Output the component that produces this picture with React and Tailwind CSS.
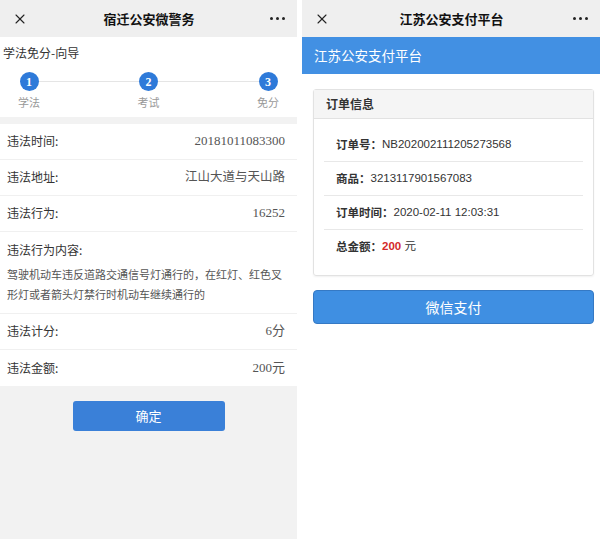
import { X } from "lucide-react"

const cjk = { fontFamily: '"Noto Sans CJK SC", "Noto Sans", sans-serif' }
const serif = { fontFamily: '"Liberation Serif", "Noto Sans CJK SC", serif' }

function NavBar({ title }) {
  return (
    <div className="h-[37px] bg-[#efefef] flex items-center justify-between px-[12px] shrink-0">
      <X className="w-[16px] h-[16px] text-[#222]" strokeWidth={1.6} />
      <span className="text-[13px] font-bold text-[#111]">{title}</span>
      <div className="flex gap-[3px] items-center">
        <span className="w-[3px] h-[3px] rounded-full bg-[#222]" />
        <span className="w-[3px] h-[3px] rounded-full bg-[#222]" />
        <span className="w-[3px] h-[3px] rounded-full bg-[#222]" />
      </div>
    </div>
  )
}

function Row({ label, value, last }) {
  return (
    <div className={`h-[36px] bg-white flex items-center justify-between pl-[7px] pr-[12px] ${last ? "" : "border-b border-[#f0f0f0]"}`}>
      <span className="text-[12px] text-[#333]">{label}</span>
      <span className="text-[13px] text-[#555]" style={serif}>{value}</span>
    </div>
  )
}

function Step({ n, label }) {
  return (
    <div className="flex flex-col items-center w-[40px]">
      <div className="w-[19px] h-[19px] rounded-full bg-[#2e7ad9] text-white text-[12px] font-bold flex items-center justify-center" style={serif}>{n}</div>
      <span className="text-[11px] text-[#999] mt-[3px]">{label}</span>
    </div>
  )
}

function LeftPanel() {
  return (
    <div className="w-[297px] h-[539px] bg-[#f2f2f2] flex flex-col">
      <NavBar title="宿迁公安微警务" />
      <div className="bg-white pt-[7px] pb-[6px]">
        <div className="text-[12px] text-[#333] px-[3px]">学法免分-向导</div>
        <div className="relative mt-[10px] flex justify-between px-[9px]">
          <div className="absolute left-[30px] right-[30px] top-[9px] h-[1px] bg-[#e5e5e5]" />
          <div className="relative"><Step n="1" label="学法" /></div>
          <div className="relative"><Step n="2" label="考试" /></div>
          <div className="relative"><Step n="3" label="免分" /></div>
        </div>
      </div>
      <div className="h-[7px]" />
      <Row label="违法时间:" value="20181011083300" />
      <Row label="违法地址:" value={<span style={cjk} className="text-[12.5px]">江山大道与天山路</span>} />
      <Row label="违法行为:" value="16252" />
      <div className="bg-white pl-[7px] pr-[12px] pt-[9px] pb-[9px] border-b border-[#f0f0f0]">
        <div className="text-[12px] text-[#333]">违法行为内容:</div>
        <div className="text-[11px] text-[#555] leading-[20px] mt-[5px]">
          驾驶机动车违反道路交通信号灯通行的，在红灯、红色叉形灯或者箭头灯禁行时机动车继续通行的
        </div>
      </div>
      <Row label="违法计分:" value="6分" />
      <Row label="违法金额:" value="200元" last />
      <div className="flex justify-center mt-[15px]">
        <button className="w-[152px] h-[30px] rounded-[3px] bg-[#3a80d8] text-white text-[13px]">确定</button>
      </div>
    </div>
  )
}

function InfoRow({ label, children, last }) {
  return (
    <div className={`h-[34px] flex items-center px-[12px] ${last ? "" : "border-b border-[#e8e8e8]"}`}>
      <span className="text-[11.5px] font-bold text-[#333]">{label}</span>
      <span className="text-[11.5px] text-[#333]" style={{ fontFamily: '"Liberation Sans", "Noto Sans CJK SC", sans-serif' }}>{children}</span>
    </div>
  )
}

function RightPanel() {
  return (
    <div className="w-[298px] h-[539px] bg-white flex flex-col">
      <NavBar title="江苏公安支付平台" />
      <div className="h-[37px] bg-[#4290e3] text-white text-[13.5px] flex items-center px-[12px]">江苏公安支付平台</div>
      <div className="pl-[11px] pr-[6px] pt-[15px]">
        <div className="border border-[#e2e2e2] rounded-[3px] shadow-[0_1px_2px_rgba(0,0,0,0.06)]">
          <div className="h-[29px] bg-[#f5f5f5] border-b border-[#e2e2e2] flex items-center px-[12px] text-[12px] font-bold text-[#333]">订单信息</div>
          <div className="px-[10px] pt-[9px] pb-[11px]">
            <InfoRow label="订单号：">NB202002111205273568</InfoRow>
            <InfoRow label="商品：">3213117901567083</InfoRow>
            <InfoRow label="订单时间：">2020-02-11 12:03:31</InfoRow>
            <InfoRow label="总金额：" last>
              <span className="text-[#d42a2a] font-bold">200</span> 元
            </InfoRow>
          </div>
        </div>
        <button className="mt-[14px] w-full h-[34px] rounded-[4px] bg-[#3f8fe2] border border-[#3579c4] text-white text-[14px]">微信支付</button>
      </div>
    </div>
  )
}

export default function App() {
  return (
    <div className="w-[600px] h-[539px] bg-white flex justify-between overflow-hidden" style={cjk}>
      <LeftPanel />
      <RightPanel />
    </div>
  )
}
